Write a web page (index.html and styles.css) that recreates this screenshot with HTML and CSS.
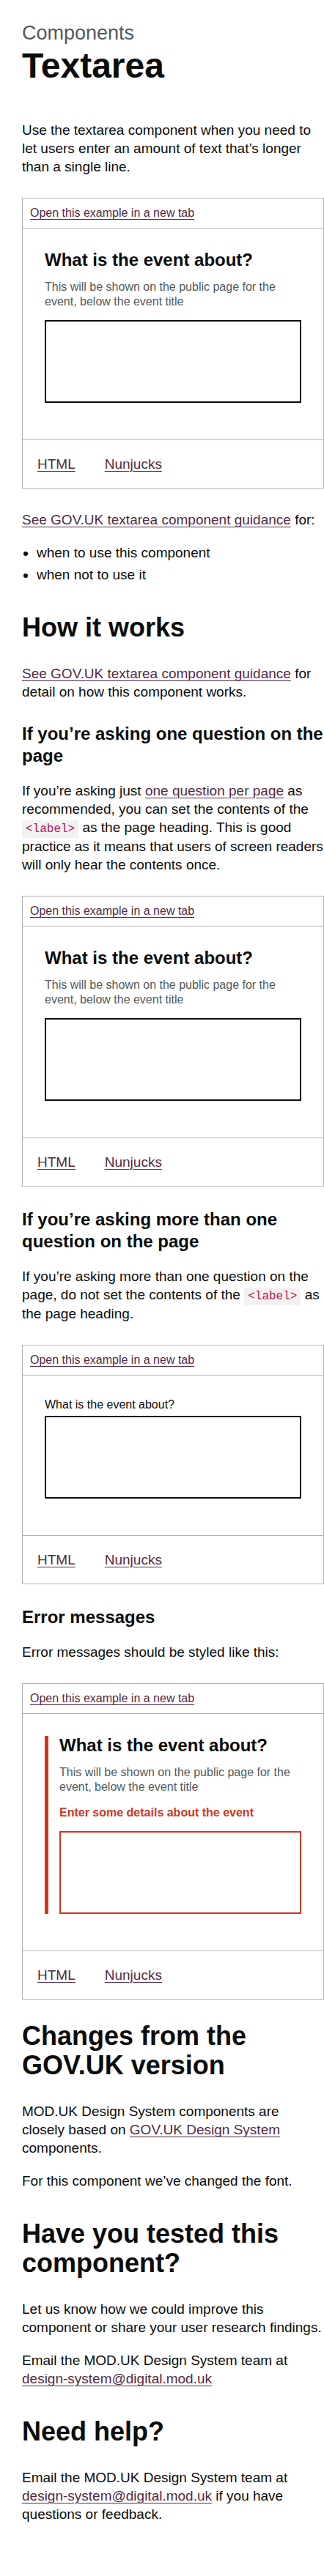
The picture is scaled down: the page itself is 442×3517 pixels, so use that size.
FILE: index.html
```html
<!DOCTYPE html>
<html lang="en">
<head>
<meta charset="utf-8">
<title>Textarea</title>
<link rel="stylesheet" href="styles.css">
</head>
<body>
<main class="page">
  <span class="caption">Components</span>
  <h1 class="title">Textarea</h1>
  <p class="body">Use the textarea component when you need to let users enter an amount of text that’s longer than a single line.</p>

  <div class="example">
    <div class="example-head"><a class="link" href="#">Open this example in a new tab</a></div>
    <div class="example-preview">
      <div class="form-group">
        <h1 class="label-wrap"><label class="label-l" for="t1">What is the event about?</label></h1>
        <div class="hint">This will be shown on the public page for the event, below the event title</div>
        <textarea class="textarea" id="t1" rows="5"></textarea>
      </div>
    </div>
    <div class="example-tabs"><a class="link tab" href="#">HTML</a><a class="link tab" href="#">Nunjucks</a></div>
  </div>

  <p class="body"><a class="link" href="#">See GOV.UK textarea component guidance</a> for:</p>
  <ul class="list">
    <li>when to use this component</li>
    <li>when not to use it</li>
  </ul>

  <h2 class="heading-l">How it works</h2>
  <p class="body"><a class="link" href="#">See GOV.UK textarea component guidance</a> for detail on how this component works.</p>

  <h3 class="heading-m">If you’re asking one question on the page</h3>
  <p class="body">If you’re asking just <a class="link" href="#">one question per page</a> as recommended, you can set the contents of the <code class="code">&lt;label&gt;</code> as the page heading. This is good practice as it means that users of screen readers will only hear the contents once.</p>

  <div class="example">
    <div class="example-head"><a class="link" href="#">Open this example in a new tab</a></div>
    <div class="example-preview">
      <div class="form-group">
        <h1 class="label-wrap"><label class="label-l" for="t2">What is the event about?</label></h1>
        <div class="hint">This will be shown on the public page for the event, below the event title</div>
        <textarea class="textarea" id="t2" rows="5"></textarea>
      </div>
    </div>
    <div class="example-tabs"><a class="link tab" href="#">HTML</a><a class="link tab" href="#">Nunjucks</a></div>
  </div>

  <h3 class="heading-m">If you’re asking more than one question on the page</h3>
  <p class="body">If you’re asking more than one question on the page, do not set the contents of the <code class="code">&lt;label&gt;</code> as the page heading.</p>

  <div class="example">
    <div class="example-head"><a class="link" href="#">Open this example in a new tab</a></div>
    <div class="example-preview">
      <div class="form-group">
        <label class="label" for="t3">What is the event about?</label>
        <textarea class="textarea" id="t3" rows="5"></textarea>
      </div>
    </div>
    <div class="example-tabs"><a class="link tab" href="#">HTML</a><a class="link tab" href="#">Nunjucks</a></div>
  </div>

  <h3 class="heading-m">Error messages</h3>
  <p class="body">Error messages should be styled like this:</p>

  <div class="example">
    <div class="example-head"><a class="link" href="#">Open this example in a new tab</a></div>
    <div class="example-preview">
      <div class="form-group form-group-error">
        <h1 class="label-wrap"><label class="label-l" for="t4">What is the event about?</label></h1>
        <div class="hint">This will be shown on the public page for the event, below the event title</div>
        <p class="error-message">Enter some details about the event</p>
        <textarea class="textarea textarea-error" id="t4" rows="5"></textarea>
      </div>
    </div>
    <div class="example-tabs"><a class="link tab" href="#">HTML</a><a class="link tab" href="#">Nunjucks</a></div>
  </div>

  <h2 class="heading-l">Changes from the GOV.UK version</h2>
  <p class="body">MOD.UK Design System components are closely based on <a class="link" href="#">GOV.UK Design System</a> components.</p>
  <p class="body">For this component we’ve changed the font.</p>

  <h2 class="heading-l">Have you tested this component?</h2>
  <p class="body">Let us know how we could improve this component or share your user research findings.</p>
  <p class="body">Email the MOD.UK Design System team at <a class="link" href="#">design-system@digital.mod.uk</a></p>

  <h2 class="heading-l">Need help?</h2>
  <p class="body">Email the MOD.UK Design System team at <a class="link" href="#">design-system@digital.mod.uk</a> if you have questions or feedback.</p>
</main>
</body>
</html>
```

FILE: styles.css
```css
* {
  box-sizing: border-box;
}

html, body {
  margin: 0;
  padding: 0;
  background: #ffffff;
}

body {
  font-family: "Liberation Sans", Arial, sans-serif;
  color: #0b0c0c;
}

.page {
  padding: 30px 0 51px 30px;
}

.caption {
  display: block;
  font-size: 27px;
  line-height: 30px;
  color: #505a5f;
  margin-bottom: 5px;
}

.title {
  font-size: 48px;
  line-height: 50px;
  font-weight: 700;
  margin: 0 0 50px;
}

.body {
  font-size: 19px;
  line-height: 1.31578947;
  margin: 0 0 20px;
}

.link {
  color: #532a45;
  text-decoration: underline;
  text-decoration-thickness: 1px;
  text-underline-offset: 0.1578em;
}

.list {
  font-size: 19px;
  line-height: 1.31578947;
  margin: 0 0 20px;
  padding-left: 20px;
}

.list li {
  margin-bottom: 5px;
}

.heading-l {
  font-size: 36px;
  line-height: 40px;
  font-weight: 700;
  margin: 40px 0 30px;
}

.example + .heading-l {
  margin-top: 30px;
}

.heading-m {
  font-size: 24px;
  line-height: 30px;
  font-weight: 700;
  margin: 30px 0 20px;
}

.code {
  font-family: "Liberation Mono", "Courier New", monospace;
  font-size: 16px;
  color: #b3125c;
  background: #f3f2f1;
  padding: 3px 5px;
}

.example {
  border: 1px solid #b1b4b6;
  margin: 30px 0;
}

.example-head {
  padding: 10px;
  font-size: 16px;
  line-height: 20px;
}

.example-preview {
  border-top: 1px solid #b1b4b6;
  padding: 30px 30px 50px;
}

.form-group-error {
  border-left: 5px solid #d4351c;
  padding-left: 15px;
}

.label-wrap {
  margin: 0;
  font-size: inherit;
}

.label-l {
  display: block;
  font-size: 24px;
  line-height: 25px;
  font-weight: 700;
  margin-bottom: 15px;
}

.label {
  display: block;
  font-size: 16px;
  line-height: 20px;
  margin-bottom: 5px;
}

.hint {
  font-size: 16px;
  line-height: 20px;
  color: #505a5f;
  margin-bottom: 15px;
}

.error-message {
  font-size: 16px;
  line-height: 20px;
  font-weight: 700;
  color: #d4351c;
  margin: 0 0 15px;
}

.textarea {
  display: block;
  width: 100%;
  height: 113px;
  margin: 0;
  padding: 5px;
  border: 2px solid #0b0c0c;
  border-radius: 0;
  font-family: "Liberation Sans", Arial, sans-serif;
  font-size: 16px;
  line-height: 1.25;
  resize: none;
  background: #ffffff;
}

.textarea-error {
  border-color: #d4351c;
}

.example-tabs {
  display: flex;
  border-top: 1px solid #b1b4b6;
  padding: 20px 0;
  font-size: 19px;
  line-height: 25px;
}

.tab {
  padding: 0 20px;
}
```
